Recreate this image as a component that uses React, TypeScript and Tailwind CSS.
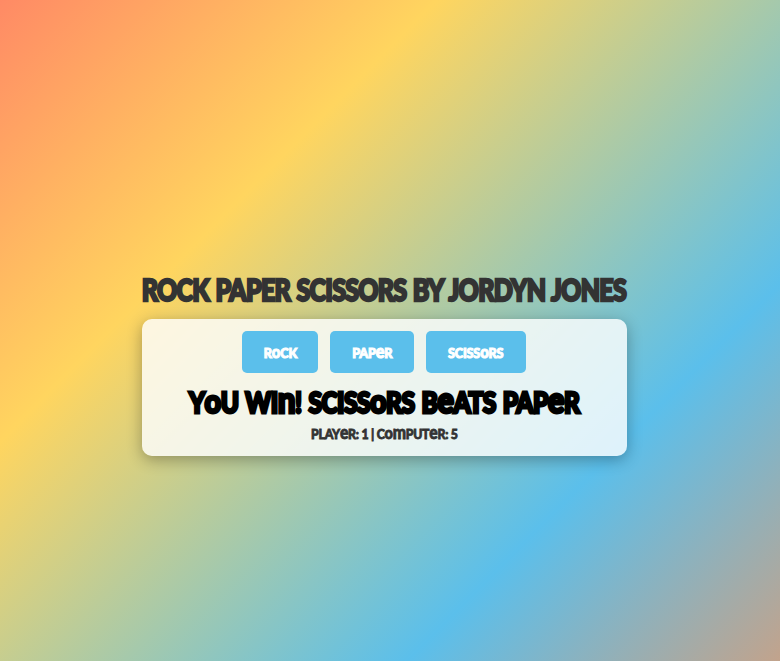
import type { ReactNode } from "react";

const moves = [
  { label: "RoCK", width: "w-[76px]" },
  { label: "PAPeR", width: "w-[84px]" },
  { label: "SCISSoRS", width: "w-[100px]" },
];

function Unicase({ text }: { text: string }): ReactNode {
  return text.split(/([a-z])/).map((part, i) =>
    /^[a-z]$/.test(part) ? (
      <span key={i} className={`leading-none ${part === "o" ? "text-[1.18em]" : "text-[1.28em]"}`}>{part}</span>
    ) : (
      part
    ),
  );
}

export default function App() {
  return (
    <main className="flex h-[661px] w-full flex-col items-center overflow-hidden bg-[linear-gradient(134.7deg,#ff8a65_0%,#ffd55f_30.5%,#5bbfeb_74%,#c2a38c_100%)] pt-[268px] pr-[12px] font-['Lato',sans-serif] font-black">
      <h1 className="flex h-[43px] w-[485px] items-center justify-center whitespace-nowrap text-[29.5px] leading-none tracking-[-0.9px] [word-spacing:1.5px] text-[#333] [-webkit-text-stroke:2.4px_#333]">
        <span className="scale-x-[0.85]">ROCK PAPER SCISSORS BY JORDYN JONES</span>
      </h1>
      <section className="mt-2 flex h-[137px] w-[485px] flex-col items-center rounded-[10px] bg-white/80 pt-3 shadow-[0_4px_15px_rgba(0,0,0,0.3)]">
        <div className="flex gap-3 text-[14px] text-white">
          {moves.map(({ label, width }) => (
            <button
              key={label}
              className={`flex h-[42px] items-center justify-center rounded-[5px] bg-[#5bbfeb] whitespace-nowrap tracking-[-0.2px] [-webkit-text-stroke:1.1px_white] ${width}`}
            >
              <span className="scale-x-[0.9]"><Unicase text={label} /></span>
            </button>
          ))}
        </div>
        <h2 className="mt-[7px] flex h-[39px] items-center text-[28px] leading-none whitespace-pre tracking-[-0.6px] [word-spacing:2px] text-black [-webkit-text-stroke:2.9px_black]">
          <span className="scale-x-[0.875]"><Unicase text="YoU WIn! SCISSoRS BeATS PAPeR" /></span>
        </h2>
        <p className="mt-[3px] flex h-[22px] items-center text-[14px] leading-none whitespace-pre tracking-[-0.3px] text-[#333] [-webkit-text-stroke:0.8px_#333]">
          <span className="scale-x-[0.88]"><Unicase text="PLAYeR: 1 | ComPUTeR: 5" /></span>
        </p>
      </section>
    </main>
  );
}
